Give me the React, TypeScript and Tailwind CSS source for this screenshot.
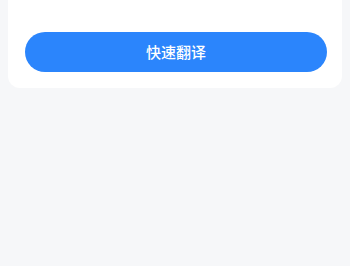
export default function App() {
  return (
    <div className="min-h-[266px] bg-[#f6f7f9] px-2 pb-4" style={{ fontFamily: '"Noto Sans", "Noto Sans CJK SC", sans-serif' }}>
      <div className="rounded-b-xl bg-white px-4 pb-4 pt-8">
        <button className="ml-px flex h-10 w-full items-center justify-center rounded-full bg-[#2b85fc] text-[15px] font-medium text-white">
          快速翻译
        </button>
      </div>
    </div>
  );
}
